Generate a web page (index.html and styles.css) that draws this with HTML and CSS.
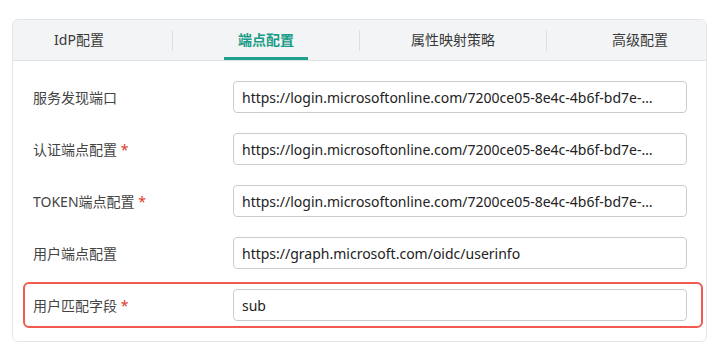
FILE: index.html
```html
<!DOCTYPE html>
<html lang="zh-CN">

<head>
  <meta charset="UTF-8">
  <meta name="viewport" content="width=device-width, initial-scale=1.0">
  <title>端点配置</title>
  <link rel="stylesheet" href="styles.css">
</head>

<body>
  <div class="card">
    <div class="tabs">
      <div class="tab">IdP配置</div>
      <span class="divider"></span>
      <div class="tab active">端点配置</div>
      <span class="divider"></span>
      <div class="tab">属性映射策略</div>
      <span class="divider"></span>
      <div class="tab">高级配置</div>
    </div>

    <div class="form">
      <div class="row">
        <label for="discovery">服务发现端口</label>
        <input type="text" id="discovery" value="https://login.microsoftonline.com/7200ce05-8e4c-4b6f-bd7e-…">
      </div>
      <div class="row">
        <label for="auth">认证端点配置 <span class="req">*</span></label>
        <input type="text" id="auth" value="https://login.microsoftonline.com/7200ce05-8e4c-4b6f-bd7e-…">
      </div>
      <div class="row">
        <label for="token">TOKEN端点配置 <span class="req">*</span></label>
        <input type="text" id="token" value="https://login.microsoftonline.com/7200ce05-8e4c-4b6f-bd7e-…">
      </div>
      <div class="row">
        <label for="userinfo">用户端点配置</label>
        <input type="text" id="userinfo" value="https://graph.microsoft.com/oidc/userinfo">
      </div>
      <div class="row highlight">
        <label for="match">用户匹配字段 <span class="req">*</span></label>
        <input type="text" id="match" value="sub">
      </div>
    </div>
  </div>
</body>

</html>
```

FILE: styles.css
```css
* {
  box-sizing: border-box;
}

body {
  margin: 0;
  padding: 19px 16px 0 12px;
  font-family: "Noto Sans", "Noto Sans CJK SC", sans-serif;
  font-size: 14px;
  color: #333;
  background: #fff;
}

.card {
  width: 695px;
  border: 1px solid #e3e5e7;
  border-radius: 6px;
  overflow: hidden;
}

.tabs {
  display: flex;
  align-items: center;
  justify-content: space-between;
  height: 41px;
  background: #f2f4f5;
  border-bottom: 1px solid #dfe3e3;
}

.tab {
  width: 132px;
  height: 40px;
  text-align: center;
  color: #3a3a3a;
  border-bottom: 3px solid transparent;
  padding-top: 2px;
  line-height: 36px;
}

.tab.active {
  width: 84px;
  margin: 0 24px;
  color: #1a9c88;
  font-weight: 600;
  border-bottom-color: #1fa18d;
}

.divider {
  width: 1px;
  height: 21px;
  background: #dde0e3;
}

.form {
  display: flex;
  flex-direction: column;
  gap: 6px;
  padding: 13px 3px 13px 10px;
}

.row {
  display: flex;
  align-items: center;
  border: 2px solid transparent;
  border-radius: 6px;
  padding: 5px 14px 5px 8px;
}

.row.highlight {
  border-color: #f25a50;
}

.row label {
  width: 200px;
  color: #444;
}

.req {
  color: #e0382b;
}

.row input {
  flex: 1;
  height: 32px;
  padding: 0 8px;
  border: 1px solid #c9cdd1;
  border-radius: 4px;
  font-family: inherit;
  font-size: 14px;
  color: #222;
  text-overflow: ellipsis;
}
```
